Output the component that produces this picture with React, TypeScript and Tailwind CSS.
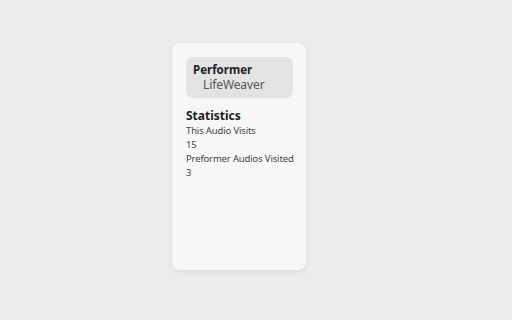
export default function App() {
  return (
    <div className="w-[512px] h-[320px] bg-[#ececec] pt-[43px] pl-[172px]" style={{ fontFamily: '"Noto Sans", sans-serif' }}>
      <div className="w-[134px] h-[227px] bg-[#f7f7f7] rounded-[8px] shadow-[0_2px_6px_rgba(0,0,0,0.08)] p-[14px] pr-[13px]">
        <div className="bg-[#e3e3e3] rounded-[7px] h-[41px] pl-[7px] pt-[5px]">
          <div className="text-[11.5px] leading-[15px] font-bold text-[#222]">Performer</div>
          <div className="text-[12px] leading-[15px] text-[#555] pl-[10px] tracking-[-0.1px]">LifeWeaver</div>
        </div>
        <div className="mt-[10px] text-[12px] leading-[16px] font-bold text-[#222]">Statistics</div>
        <div className="text-[9.5px] leading-[14px] text-[#444] tracking-[-0.15px]">
          <div>This Audio Visits</div>
          <div>15</div>
          <div className="whitespace-nowrap">Preformer Audios Visited</div>
          <div>3</div>
        </div>
      </div>
    </div>
  );
}
